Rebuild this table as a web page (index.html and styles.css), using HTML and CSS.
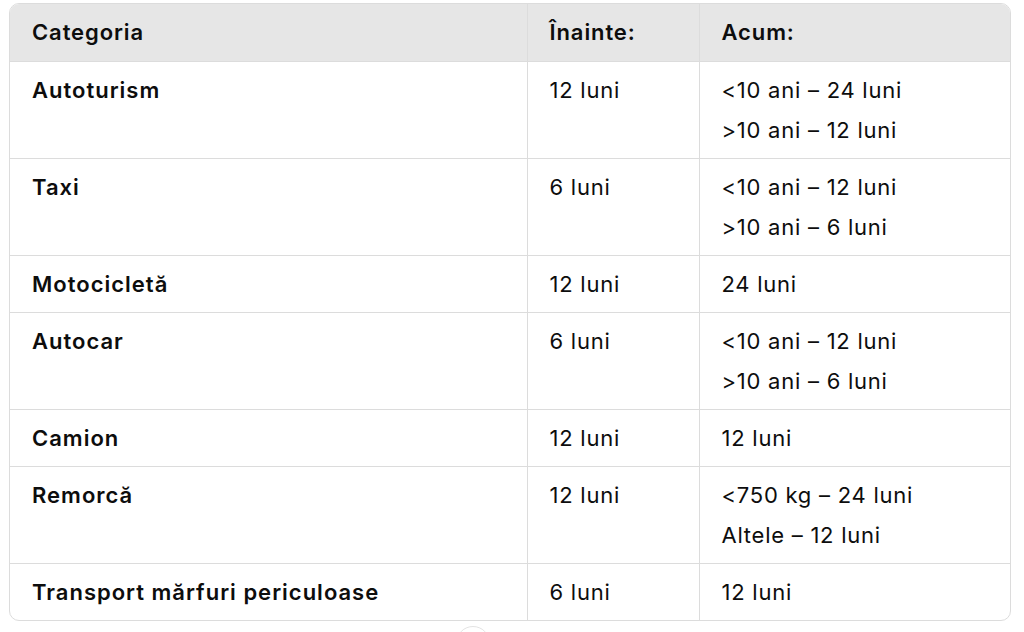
FILE: index.html
```html
<!DOCTYPE html>
<html lang="ro">
<head>
<meta charset="utf-8">
<link rel="stylesheet" href="styles.css">
</head>
<body>
<div class="wrap">
  <table class="tbl">
    <colgroup>
      <col class="c1"><col class="c2"><col class="c3">
    </colgroup>
    <thead>
      <tr><th>Categoria</th><th>Înainte:</th><th>Acum:</th></tr>
    </thead>
    <tbody>
      <tr><td class="cat">Autoturism</td><td>12 luni</td><td>&lt;10 ani – 24 luni<br>&gt;10 ani – 12 luni</td></tr>
      <tr><td class="cat">Taxi</td><td>6 luni</td><td>&lt;10 ani – 12 luni<br>&gt;10 ani – 6 luni</td></tr>
      <tr><td class="cat">Motocicletă</td><td>12 luni</td><td>24 luni</td></tr>
      <tr><td class="cat">Autocar</td><td>6 luni</td><td>&lt;10 ani – 12 luni<br>&gt;10 ani – 6 luni</td></tr>
      <tr><td class="cat">Camion</td><td>12 luni</td><td>12 luni</td></tr>
      <tr><td class="cat">Remorcă</td><td>12 luni</td><td>&lt;750 kg – 24 luni<br>Altele – 12 luni</td></tr>
      <tr><td class="cat">Transport mărfuri periculoase</td><td>6 luni</td><td>12 luni</td></tr>
    </tbody>
  </table>
</div>
<div class="scroll-btn"></div>
</body>
</html>
```
FILE: styles.css
```css
html, body {
  margin: 0;
  padding: 0;
  background: #ffffff;
}
body {
  padding: 3px 13px 0 9px;
  font-family: Inter, "Noto Sans", sans-serif;
  color: #0d0d0d;
  position: relative;
  height: 632px;
  box-sizing: border-box;
  overflow: hidden;
}
.wrap {
  border: 1px solid #dcdcdc;
  border-radius: 10px;
  overflow: hidden;
}
.tbl {
  width: 100%;
  border-collapse: collapse;
  table-layout: fixed;
  font-size: 22px;
  letter-spacing: 0.75px;
  line-height: 40px;
}
.c1 { width: 517px; }
.c2 { width: 172px; }
.tbl th, .tbl td {
  text-align: left;
  vertical-align: top;
  padding: 8px 12px 8px 22px;
  border-left: 1px solid #dcdcdc;
  border-top: 1px solid #dcdcdc;
}
.tbl th:first-child, .tbl td:first-child { border-left: none; }
.tbl thead th {
  border-top: none;
  background: #e6e6e6;
  font-weight: 600;
  letter-spacing: 0.9px;
  padding-top: 8px;
  padding-bottom: 9px;
}
.tbl td { font-weight: 400; }
.tbl td.cat { font-weight: 600; letter-spacing: 1px; }
.scroll-btn {
  position: absolute;
  left: 456px;
  top: 626px;
  width: 32px;
  height: 32px;
  border-radius: 50%;
  border: 1px solid #e3e3e3;
  background: #fff;
}
```
